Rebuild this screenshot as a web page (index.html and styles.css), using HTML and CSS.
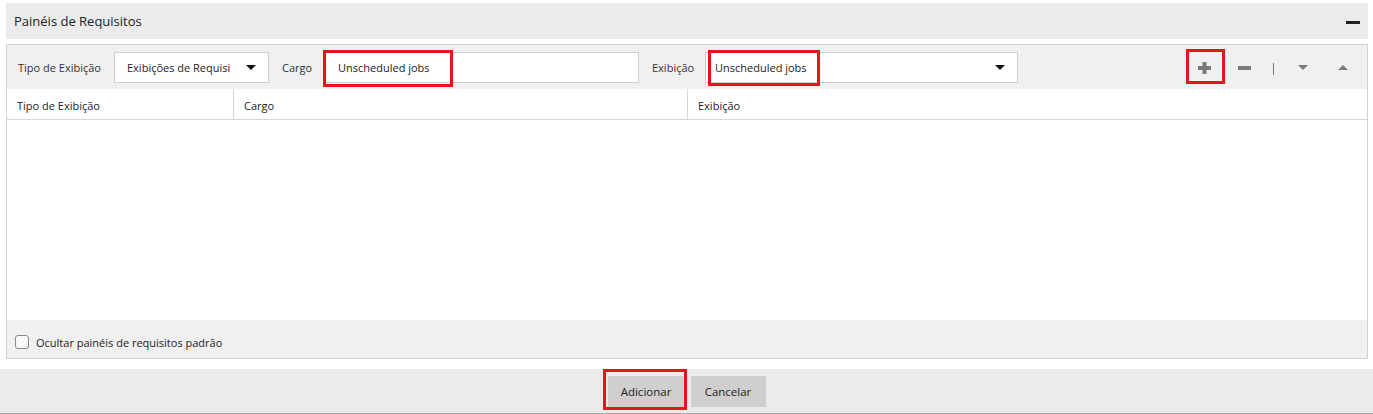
FILE: index.html
```html
<!DOCTYPE html>
<html lang="pt">
<head>
<meta charset="utf-8">
<link rel="stylesheet" href="styles.css">
</head>
<body>
<div class="page">
  <div class="header">
    <span class="title">Painéis de Requisitos</span>
    <span class="collapse"></span>
  </div>
  <div class="panel">
    <div class="toolbar">
      <span class="lbl lbl-tipo">Tipo de Exibição</span>
      <div class="select sel-tipo"><span>Exibições de Requisi</span><span class="caret"></span></div>
      <span class="lbl lbl-cargo">Cargo</span>
      <div class="input inp-cargo"><span>Unscheduled jobs</span><span class="mark mark-cargo"></span></div>
      <span class="lbl lbl-exib">Exibição</span>
      <div class="select sel-exib"><span>Unscheduled jobs</span><span class="caret"></span><span class="mark mark-exib"></span></div>
      <div class="tools">
        <span class="tool plus"><svg width="13" height="12" viewBox="0 0 13 12"><rect x="0" y="4" width="13" height="4" fill="#7a7a7a"/><rect x="4.5" y="0" width="4" height="12" fill="#7a7a7a"/></svg><span class="mark mark-plus"></span></span>
        <span class="tool minus"><svg width="13" height="4" viewBox="0 0 13 4"><rect x="0" y="0" width="13" height="4" fill="#7a7a7a"/></svg></span>
        <span class="tool sep"></span>
        <span class="tool down"><svg width="10" height="5" viewBox="0 0 10 5"><path d="M0 0H10L5 5Z" fill="#7a7a7a"/></svg></span>
        <span class="tool up"><svg width="10" height="5" viewBox="0 0 10 5"><path d="M0 5H10L5 0Z" fill="#7a7a7a"/></svg></span>
      </div>
    </div>
    <div class="thead">
      <div class="th c1">Tipo de Exibição</div>
      <div class="th c2">Cargo</div>
      <div class="th c3">Exibição</div>
    </div>
    <div class="tbody"></div>
    <div class="pfoot">
      <span class="chk"></span>
      <span class="chk-lbl">Ocultar painéis de requisitos padrão</span>
    </div>
  </div>
</div>
<div class="footer">
  <div class="btn-wrap"><button class="btn btn-add">Adicionar</button><span class="mark mark-add"></span></div>
  <button class="btn btn-cancel">Cancelar</button>
</div>
</body>
</html>
```
FILE: styles.css
```css
* { box-sizing: border-box; }
body {
  margin: 0;
  background: #fff;
  font-family: "Open Sans", "Noto Sans", sans-serif;
  color: #222;
  width: 1373px;
  height: 414px;
  overflow: hidden;
}
.page {
  padding: 3px 5px 0 6px;
}
.header {
  height: 36px;
  background: #ebebeb;
  display: flex;
  align-items: center;
  justify-content: space-between;
  padding: 0 8px 0 8px;
}
.title {
  font-size: 13px;
  color: #222;
}
.collapse {
  width: 14px;
  height: 3px;
  background: #222;
  margin-top: 2px;
}
.panel {
  margin-top: 5px;
  border: 1px solid #d2d2d2;
  height: 315px;
  display: flex;
  flex-direction: column;
}
.toolbar {
  height: 44px;
  background: #f0f0f0;
  display: flex;
  align-items: center;
  padding-left: 11px;
  font-size: 11px;
}
.lbl { color: #333; white-space: nowrap; }
.lbl-tipo { width: 96px; }
.lbl-cargo { width: 42px; }
.lbl-exib { width: 53px; }
.select, .input {
  position: relative;
  height: 31px;
  background: #fff;
  border: 1px solid #cfcfcf;
  display: flex;
  align-items: center;
  justify-content: space-between;
  white-space: nowrap;
}
.sel-tipo { width: 155px; padding: 0 12px 0 12px; margin-right: 13px; }
.inp-cargo { width: 315px; padding-left: 13px; margin-right: 13px; }
.sel-exib { width: 313px; padding: 0 12px 0 9px; }
.caret {
  width: 0; height: 0;
  border-left: 5px solid transparent;
  border-right: 5px solid transparent;
  border-top: 5px solid #111;
}
.mark {
  position: absolute;
  border: 3px solid #e8141c;
  pointer-events: none;
}
.mark-cargo { left: -2px; top: -3px; width: 130px; height: 37px; }
.mark-exib { left: 2px; top: -3px; width: 112px; height: 36px; }
.tools {
  margin-left: auto;
  display: flex;
  align-items: center;
  height: 100%;
}
.tool {
  position: relative;
  display: flex;
  align-items: center;
  justify-content: center;
}
.plus { width: 13px; margin-right: 27px; margin-top: 2px; }
.minus { width: 13px; margin-right: 22px; margin-top: 2px; }
.sep { width: 1px; height: 12px; background: #7a7a7a; margin-right: 24px; margin-top: 4px; }
.down { width: 10px; margin-right: 30px; margin-top: 1px; }
.up { width: 10px; margin-right: 19px; margin-top: 1px; }
.mark-plus { left: -12px; top: -13px; width: 39px; height: 35px; }
.thead {
  height: 31px;
  display: flex;
  border-bottom: 1px solid #d6d6d6;
  font-size: 11px;
  background: #fff;
}
.th {
  display: flex;
  align-items: center;
  padding-left: 10px;
  padding-top: 2px;
}
.c1 { width: 227px; border-right: 1px solid #d6d6d6; }
.c2 { width: 454px; border-right: 1px solid #d6d6d6; }
.c3 { flex: 1; }
.tbody { flex: 1; background: #fff; }
.pfoot {
  height: 38px;
  background: #f0f0f0;
  display: flex;
  align-items: center;
  padding-left: 8px;
  padding-top: 6px;
  font-size: 11px;
}
.chk {
  width: 14px;
  height: 14px;
  border: 1px solid #8a8a8a;
  border-radius: 3px;
  background: #f8f8f8;
  margin-right: 7px;
}
.chk-lbl { color: #222; }
.footer {
  margin-top: 10px;
  height: 45px;
  background: #ebebeb;
  border-bottom: 1px solid #a8a8a8;
  display: flex;
  justify-content: center;
  align-items: flex-start;
  padding-top: 7px;
  gap: 6px;
}
.btn-wrap { position: relative; }
.btn {
  height: 31px;
  border: none;
  background: #d0cece;
  font-family: "Open Sans", "Noto Sans", sans-serif;
  font-size: 11.5px;
  color: #222;
  padding: 0;
}
.btn-add { width: 77px; }
.btn-cancel { width: 75px; }
.mark-add { left: -5px; top: -7px; width: 84px; height: 41px; }
```
